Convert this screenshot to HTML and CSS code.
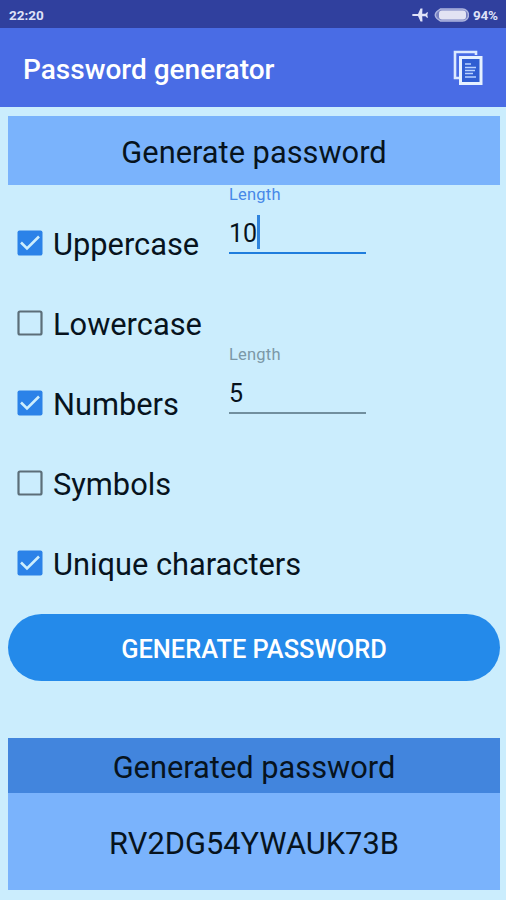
FILE: index.html
```html
<!DOCTYPE html>
<html lang="en">
<head>
<meta charset="utf-8">
<title>Password generator</title>
<link rel="stylesheet" href="styles.css">
</head>
<body>
<div class="status">
  <span class="clock">22:20</span>
  <svg class="plane" width="18" height="14" viewBox="0 0 18 14"><path d="M1 7Q1 6 2.500 6H7L9.500 .5H11.500L11.200 5.800H14.500L16 4.300H17L16.300 7L17 9.700H16L14.500 8.200H11.200L11.500 13.500H9.500L7 8H2.500Q1 8 1 7z" fill="#e0e3f8"/></svg>
  <svg class="battery" width="35" height="14" viewBox="0 0 35 14"><path d="M6.500 1h22a6 6 0 0 1 0 12h-22L3 10.500Q-.5 7 3 3.500z" fill="#7780c0" stroke="#aeb5df" stroke-width="1.400"/><rect x="5" y="2.500" width="27" height="9" rx="3" fill="#e2e3f3"/></svg>
  <span class="percent">94%</span>
</div>
<header class="appbar">
  <h1>Password generator</h1>
  <svg class="copy" width="30" height="36" viewBox="0 0 30 36"><path d="M23 5V2H2v26h4" fill="none" stroke="#dce9ff" stroke-width="2.600"/><rect x="7.500" y="7.500" width="20.500" height="26" fill="#2f5ed2" stroke="#e6f1ff" stroke-width="3"/><path d="M12 14h6M12 17.500h11M12 20.500h10M12 23.500h8M12 27h11" stroke="#b9d3ff" stroke-width="1.400"/></svg>
</header>
<main>
  <h2 class="heading">Generate password</h2>
  <div class="options">
    <div class="row">
      <div class="option"><svg class="box" width="26" height="26" viewBox="0 0 26 26"><rect x=".5" y=".5" width="25" height="25" rx="2" fill="#2b82e8"/><path d="M4 12.500l6 6L22 6.500" fill="none" stroke="#cdeefd" stroke-width="2.600"/></svg><span>Uppercase</span></div>
      <div class="field active"><span class="label">Length</span><div class="value"><span>10</span><i class="caret"></i></div></div>
    </div>
    <div class="row">
      <div class="option"><svg class="box" width="26" height="26" viewBox="0 0 26 26"><rect x="1.500" y="1.500" width="23" height="23" rx="1.500" fill="none" stroke="#5c6e78" stroke-width="2.200"/></svg><span>Lowercase</span></div>
    </div>
    <div class="row">
      <div class="option"><svg class="box" width="26" height="26" viewBox="0 0 26 26"><rect x=".5" y=".5" width="25" height="25" rx="2" fill="#2b82e8"/><path d="M4 12.500l6 6L22 6.500" fill="none" stroke="#cdeefd" stroke-width="2.600"/></svg><span>Numbers</span></div>
      <div class="field"><span class="label">Length</span><div class="value"><span>5</span></div></div>
    </div>
    <div class="row">
      <div class="option"><svg class="box" width="26" height="26" viewBox="0 0 26 26"><rect x="1.500" y="1.500" width="23" height="23" rx="1.500" fill="none" stroke="#5c6e78" stroke-width="2.200"/></svg><span>Symbols</span></div>
    </div>
    <div class="row">
      <div class="option"><svg class="box" width="26" height="26" viewBox="0 0 26 26"><rect x=".5" y=".5" width="25" height="25" rx="2" fill="#2b82e8"/><path d="M4 12.500l6 6L22 6.500" fill="none" stroke="#cdeefd" stroke-width="2.600"/></svg><span>Unique characters</span></div>
    </div>
  </div>
  <button class="generate">GENERATE PASSWORD</button>
  <section class="result">
    <h2 class="result-title">Generated password</h2>
    <div class="result-value"><span>RV2DG54YWAUK73B</span></div>
  </section>
</main>
</body>
</html>
```

FILE: styles.css
```css
* { box-sizing: border-box; }
body {
  margin: 0;
  height: 900px;
  background: #cbedfd;
  color: #07131d;
  font-family: Roboto, sans-serif;
}
h1, h2 { margin: 0; font-weight: 400; }
svg { display: block; flex: none; }
.status {
  display: flex;
  align-items: center;
  height: 28px;
  padding: 1px 8px 0 9px;
  background: #30409e;
  color: #dfe2f7;
  font-size: 13.5px;
  font-weight: 700;
}
.plane { margin-left: auto; margin-right: 5px; }
.battery { margin-right: 4px; }
.percent { width: 25px; white-space: nowrap; letter-spacing: -.2px; }
.appbar {
  display: flex;
  align-items: center;
  justify-content: space-between;
  height: 79px;
  padding: 3px 23px 0;
  background: #496ce5;
}
.appbar h1 { color: #fff; font-size: 28px; font-weight: 500; }
.copy { margin-bottom: 2px; }
main { padding: 9px 6px 0 8px; }
.heading {
  display: flex;
  align-items: center;
  justify-content: center;
  height: 69px;
  padding-top: 4px;
  background: #7ab3fc;
  font-size: 30.8px;
}
.row { display: flex; height: 80px; }
.option {
  display: flex;
  align-items: center;
  gap: 10px;
  width: 221px;
  height: 44px;
  margin-top: 36px;
  padding-left: 9px;
  font-size: 30.8px;
  white-space: nowrap;
}
.option span { padding-top: 3px; }
.field { width: 137px; color: #7b98a7; }
.label {
  display: block;
  height: 30px;
  font-size: 16.5px;
  line-height: 20px;
  letter-spacing: .2px;
}
.value {
  display: flex;
  height: 39px;
  border-bottom: 2px solid #718f9e;
  color: #07131d;
  font-size: 25px;
  line-height: 38px;
}
.active { color: #4788e8; }
.active .value { border-color: #1f7ddd; }
.caret { width: 3px; height: 34px; background: #2f84dd; }
.generate {
  display: flex;
  align-items: center;
  justify-content: center;
  width: 100%;
  height: 67px;
  margin-top: 29px;
  padding: 3px 0 0;
  border: 0;
  border-radius: 34px;
  background: #248aea;
  color: #fff;
  font: 500 25.4px Roboto, sans-serif;
}
.result { margin-top: 57px; font-size: 30.8px; }
.result-title {
  display: flex;
  align-items: center;
  justify-content: center;
  height: 55px;
  padding-top: 4px;
  background: #4285dd;
  font-size: 30.8px;
}
.result-value {
  display: flex;
  align-items: center;
  justify-content: center;
  height: 97px;
  padding-top: 4px;
  background: #7ab3fc;
}
```
